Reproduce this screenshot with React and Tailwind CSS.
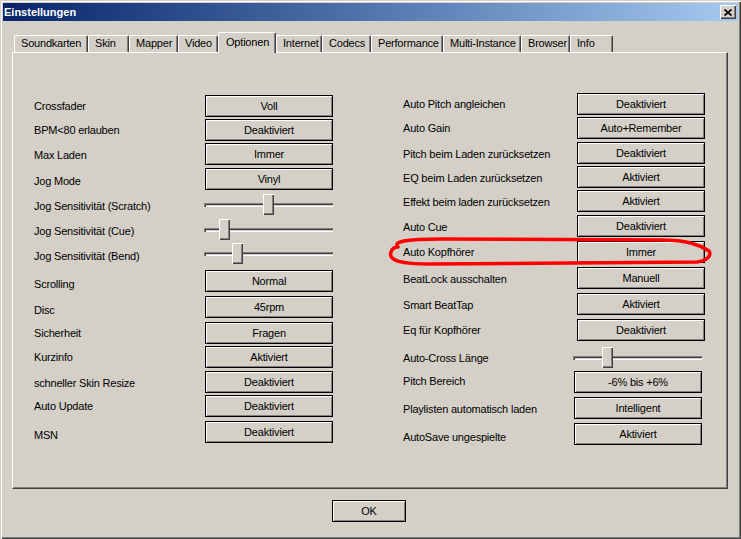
import React from "react";

const tabs = [
    { label: "Soundkarten", w: "w-[74px]" },
    { label: "Skin", w: "w-[41px]" },
    { label: "Mapper", w: "w-[49px]" },
    { label: "Video", w: "w-[40px]" },
    { label: "Optionen", w: "w-[58px]", active: true },
    { label: "Internet", w: "w-[46px]" },
    { label: "Codecs", w: "w-[49px]" },
    { label: "Performance", w: "w-[72px]" },
    { label: "Multi-Instance", w: "w-[78px]" },
    { label: "Browser", w: "w-[49px]" },
    { label: "Info", w: "w-[43px]" },
];

// h = distance to the next row, lift = how far the label sits below the control's centre
const leftRows = [
    { label: "Crossfader", value: "Voll", h: "h-[24px]", lift: "mt-0" },
    { label: "BPM<80 erlauben", value: "Deaktiviert", h: "h-[24px]", lift: "mt-0" },
    { label: "Max Laden", value: "Immer", h: "h-[25px]", lift: "mt-[1px]" },
    { label: "Jog Mode", value: "Vinyl", h: "h-[26px]", lift: "mt-[2px]" },
    { label: "Jog Sensitivität (Scratch)", slider: "left-[59px]", h: "h-[25px]", lift: "mt-[1px]" },
    { label: "Jog Sensitivität (Cue)", slider: "left-[15px]", h: "h-[24px]", lift: "mt-[1px]" },
    { label: "Jog Sensitivität (Bend)", slider: "left-[28px]", h: "h-[27px]", lift: "mt-[2px]" },
    { label: "Scrolling", value: "Normal", h: "h-[26px]", lift: "mt-[3px]" },
    { label: "Disc", value: "45rpm", h: "h-[26px]", lift: "mt-[3px]" },
    { label: "Sicherheit", value: "Fragen", h: "h-[24px]", lift: "mt-0" },
    { label: "Kurzinfo", value: "Aktiviert", h: "h-[25px]", lift: "mt-0" },
    { label: "schneller Skin Resize", value: "Deaktiviert", h: "h-[24px]", lift: "mt-[1px]" },
    { label: "Auto Update", value: "Deaktiviert", h: "h-[26px]", lift: "mt-0" },
    { label: "MSN", value: "Deaktiviert", h: "h-[22px]", lift: "mt-[3px]" },
];

const rightRows = [
    { label: "Auto Pitch angleichen", value: "Deaktiviert", h: "h-[24px]", lift: "mt-0", shift: "ml-[3px]" },
    { label: "Auto Gain", value: "Auto+Remember", h: "h-[25px]", lift: "mt-0", shift: "ml-[3px]" },
    { label: "Pitch beim Laden zurücksetzen", value: "Deaktiviert", h: "h-[24px]", lift: "mt-[1px]", shift: "ml-[3px]" },
    { label: "EQ beim Laden zurücksetzen", value: "Aktiviert", h: "h-[24px]", lift: "mt-[1px]", shift: "ml-[3px]" },
    { label: "Effekt beim laden zurücksetzen", value: "Aktiviert", h: "h-[25px]", lift: "mt-[1px]", shift: "ml-[3px]" },
    { label: "Auto Cue", value: "Deaktiviert", h: "h-[26px]", lift: "mt-[1px]", shift: "ml-[3px]" },
    { label: "Auto Kopfhörer", value: "Immer", h: "h-[26px]", lift: "mt-0", shift: "ml-[3px]" },
    { label: "BeatLock ausschalten", value: "Manuell", h: "h-[26px]", lift: "mt-[1px]", shift: "ml-[3px]" },
    { label: "Smart BeatTap", value: "Aktiviert", h: "h-[26px]", lift: "mt-[1px]", shift: "ml-[3px]" },
    { label: "Eq für Kopfhörer", value: "Deaktiviert", h: "h-[28px]", lift: "mt-0", shift: "ml-[3px]" },
    { label: "Auto-Cross Länge", slider: "left-[29px]", h: "h-[24px]", lift: "mt-0", shift: "ml-0" },
    { label: "Pitch Bereich", value: "-6% bis +6%", h: "h-[26px]", lift: "-mt-[1px]", shift: "ml-0" },
    { label: "Playlisten automatisch laden", value: "Intelligent", h: "h-[26px]", lift: "mt-[1px]", shift: "ml-0" },
    { label: "AutoSave ungespielte", value: "Aktiviert", h: "h-[22px]", lift: "mt-[3px]", shift: "ml-0" },
];

function PushButton({ text, className = "" }) {
    return (
        <div className={`flex h-[22px] items-center justify-center border border-black bg-[#d4d0c8] shadow-[inset_1px_1px_#ffffff,inset_-1px_-1px_#808080] ${className}`}>
            {text}
        </div>
    );
}

function Slider({ thumb }) {
    return (
        <div className="relative h-[21px] w-[129px] -ml-px">
            <div className="absolute left-0 right-0 top-[9px] h-[4px] bg-[#d4d0c8] shadow-[inset_1px_1px_#808080,inset_2px_2px_#404040,inset_-1px_-1px_#ffffff]"></div>
            <div className={`absolute top-0 h-[21px] w-[11px] bg-[#d4d0c8] shadow-[inset_1px_1px_#ffffff,inset_-1px_-1px_#404040,inset_-2px_-2px_#808080] ${thumb}`}></div>
        </div>
    );
}

function OptionRow({ row }) {
    return (
        <div className={`flex items-start ${row.h}`}>
            <div className={`flex h-[22px] w-[171px] items-center whitespace-nowrap ${row.lift}`}>{row.label}</div>
            <div className={row.shift || ""}>
                {row.slider ? <Slider thumb={row.slider} /> : <PushButton text={row.value} className="w-[128px]" />}
            </div>
        </div>
    );
}

function App() {
    return (
        <div className="relative h-[539px] w-[741px] overflow-hidden bg-[#d4d0c8] p-[3px] font-['Liberation_Sans',Arial,sans-serif] text-[11px] tracking-[-0.2px] text-black shadow-[inset_1px_1px_#d4d0c8,inset_2px_2px_#ffffff,inset_-1px_-1px_#404040,inset_-2px_-2px_#808080]">
            {/* Title bar */}
            <div className="flex h-[18px] items-center justify-between bg-gradient-to-r from-[#0a246a] to-[#a6caf0] pl-[1px] pr-[2px]">
                <span className="text-[11px] font-bold tracking-normal text-white">Einstellungen</span>
                <div className="flex h-[14px] w-[16px] items-center justify-center bg-[#d4d0c8] shadow-[inset_1px_1px_#ffffff,inset_-1px_-1px_#404040,inset_-2px_-2px_#808080]">
                    <svg width="8" height="7" viewBox="0 0 8 7">
                        <path d="M0.5 0.5 L7.5 6.5 M7.5 0.5 L0.5 6.5" stroke="#000" strokeWidth="1.7" fill="none" />
                    </svg>
                </div>
            </div>

            {/* Tabs */}
            <div className="ml-[11px] mt-[11px] flex h-[20px] items-end">
                {tabs.map((tab) => (
                    <div
                        key={tab.label}
                        className={
                            tab.active
                                ? `relative z-10 -mb-px flex h-[21px] items-start overflow-hidden whitespace-nowrap rounded-t-[2px] border-l border-t border-white bg-[#d4d0c8] pl-[7px] pt-[2px] leading-[14px] shadow-[inset_-1px_0_#808080] border-r border-r-[#404040] ${tab.w}`
                                : `flex h-[17px] items-start overflow-hidden whitespace-nowrap rounded-t-[2px] border-l border-t border-white bg-[#d4d0c8] pl-[6px] pt-0 leading-[14px] shadow-[inset_-1px_0_#808080] border-r border-r-[#404040] ${tab.w}`
                        }
                    >
                        {tab.label}
                    </div>
                ))}
            </div>

            {/* Options panel */}
            <div className="ml-[9px] flex h-[437px] w-[716px] items-start border-l border-t border-white border-r border-b border-r-[#404040] border-b-[#404040] pl-[21px] shadow-[inset_-1px_-1px_#808080]">
                <div className="mt-[42px] flex flex-col">
                    {leftRows.map((row) => (
                        <OptionRow key={row.label} row={row} />
                    ))}
                </div>
                <div className="ml-[70px] mt-[40px] flex flex-col">
                    {rightRows.map((row) => (
                        <OptionRow key={row.label} row={row} />
                    ))}
                </div>
            </div>

            <PushButton text="OK" className="ml-[329px] mt-[11px] w-[74px]" />

            {/* Red marker drawn over the screenshot */}
            <svg className="pointer-events-none absolute left-0 top-0" width="741" height="539" viewBox="0 0 741 539">
                <path
                    d="M398 247 C392 241 410 239 440 239 L660 240 C688 240 700 245 709 251 C712 256 706 261 697 262 L430 264 C402 264 388 261 391 252 C392 249 395 247 398 247"
                    fill="none"
                    stroke="#ff0000"
                    strokeWidth="3.5"
                    strokeLinecap="round"
                    strokeLinejoin="round"
                />
            </svg>
        </div>
    );
}

export default App;
